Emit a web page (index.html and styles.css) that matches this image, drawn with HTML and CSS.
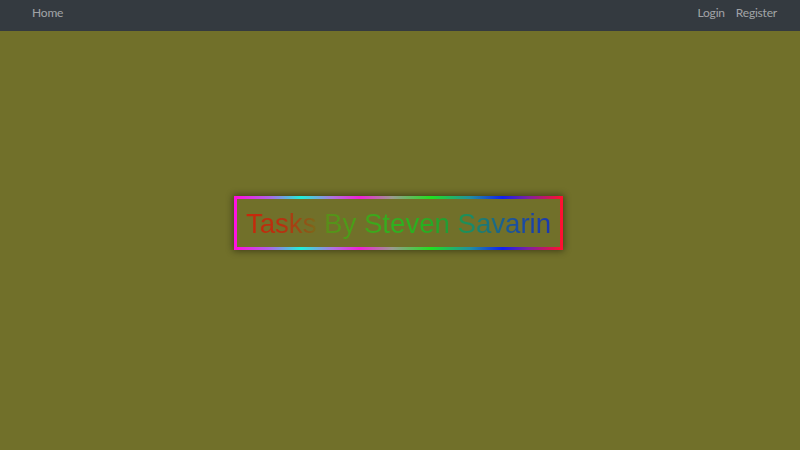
FILE: index.html
```html
<!DOCTYPE html>
<html>
<head>
<meta charset="utf-8">
<link rel="stylesheet" href="styles.css">
</head>
<body>
<nav class="navbar">
  <div class="nav-group"><a class="nav-link" href="#">Home</a></div>
  <div class="nav-group"><a class="nav-link" href="#">Login</a><a class="nav-link" href="#">Register</a></div>
</nav>
<main class="main">
  <div class="title-box">
    <h1 class="title">Tasks By Steven Savarin</h1>
  </div>
</main>
</body>
</html>
```
FILE: styles.css
```css
html, body {
  margin: 0;
  padding: 0;
  height: 100%;
}
body {
  background: #71702a;
  font-family: "Lato", "Liberation Sans", sans-serif;
  display: flex;
  flex-direction: column;
}
.navbar {
  height: 31px;
  box-sizing: border-box;
  background: #343a40;
  display: flex;
  align-items: flex-start;
  justify-content: space-between;
  padding: 6px 23px 0 32px;
  flex-shrink: 0;
}
.nav-group {
  display: flex;
  gap: 11px;
}
.nav-link {
  color: rgba(255, 255, 255, 0.55);
  text-decoration: none;
  font-size: 12px;
  letter-spacing: -0.2px;
  line-height: 14px;
}
.main {
  flex: 1;
  display: flex;
  align-items: center;
  justify-content: center;
  padding-bottom: 35px;
}
.title-box {
  border: 3px solid transparent;
  border-image: linear-gradient(to right, #ff10e0 0%, #b060e8 10%, #20f0d8 20%, #b070e0 30%, #f020d8 38%, #9a9a90 48%, #20e020 60%, #2090a0 72%, #1020f0 82%, #8020a0 90%, #ff1030 100%) 1;
  box-shadow: 0 0 7px 1px rgba(0, 0, 0, 0.45);
  padding: 9px 9px 8px 9px;
  margin-left: -3px;
}
.title {
  margin: 0;
  font-family: "Liberation Sans", Arial, sans-serif;
  font-weight: normal;
  font-size: 27.6px;
  line-height: 31px;
  background: linear-gradient(to right, #c8280a 0%, #b83010 12%, #8a5a18 21%, #58901a 27%, #48a018 36%, #30b020 48%, #28b020 58%, #22a030 65%, #1a8a68 74%, #1a50a0 88%, #1a38b0 100%);
  -webkit-background-clip: text;
  background-clip: text;
  color: transparent;
}
```
